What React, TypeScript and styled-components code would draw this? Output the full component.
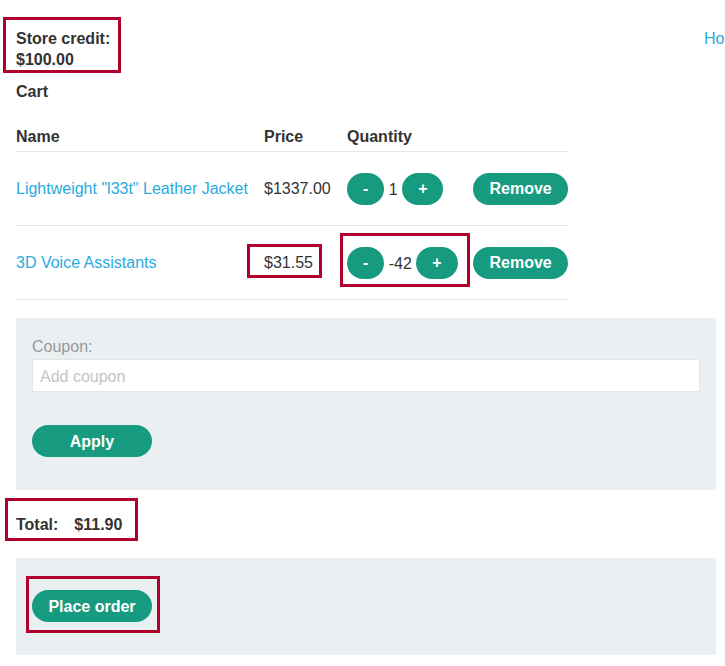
import React from "react";
import styled, { createGlobalStyle } from "styled-components";

const Global = createGlobalStyle`
  html, body { margin: 0; padding: 0; background: #fff; overflow: hidden; }
  body { font-family: "Liberation Sans", Arial, sans-serif; font-size: 16px; color: #333332; }
  * { box-sizing: border-box; }
`;

const Page = styled.div`
  width: 725px;
  overflow: hidden;
  padding: 0 0 0 16px;
`;

const TopBar = styled.div`
  display: flex;
  align-items: flex-start;
  justify-content: space-between;
  width: 740px;
  padding-top: 28px;
`;

const HomeLink = styled.a`
  color: #29abe0;
  text-decoration: none;
  line-height: 21px;
  width: 52px;
`;

const Strong = styled.div`
  font-weight: bold;
  line-height: 21px;
`;

const Highlight = styled.span<{ $t: number; $r: number; $b: number; $l: number }>`
  position: relative;
  display: inline-block;
  &::after {
    content: "";
    position: absolute;
    top: ${(p) => -p.$t}px;
    right: ${(p) => -p.$r}px;
    bottom: ${(p) => -p.$b}px;
    left: ${(p) => -p.$l}px;
    border: 3px solid #b0002b;
    pointer-events: none;
  }
`;

const CartTitle = styled.div`
  font-weight: bold;
  line-height: 21px;
  margin-top: 11px;
`;

const Table = styled.table`
  border-collapse: collapse;
  table-layout: fixed;
  width: 552px;
  margin-top: 18px;
`;

const Th = styled.th`
  text-align: left;
  font-weight: bold;
  padding: 6px 0 4px;
  line-height: 21px;
  border-bottom: 1px solid #e6e6e6;
`;

const Tr = styled.tr`
  height: 74px;
  border-bottom: 1px solid #e6e6e6;
`;

const Td = styled.td`
  padding: 0;
  vertical-align: middle;
  line-height: 21px;
  white-space: nowrap;
`;

const ProductLink = styled.a`
  color: #29abe0;
  text-decoration: none;
`;

const Button = styled.button<{ $wide?: boolean; $lower?: boolean }>`
  display: inline-block;
  height: 32px;
  min-width: ${(p) => (p.$wide ? "120px" : "0")};
  padding: ${(p) => (p.$lower ? "1px 16px 0" : "0 16px")};
  border: none;
  border-radius: 20px;
  background: #179b80;
  color: #fff;
  font-family: "Liberation Sans", Arial, sans-serif;
  font-size: 16px;
  font-weight: bold;
  line-height: ${(p) => (p.$lower ? "31px" : "32px")};
  vertical-align: middle;
  cursor: pointer;
`;

const RemoveButton = styled(Button)`
  padding: 0 16.5px;
`;

const Qty = styled.span`
  vertical-align: middle;
`;

const Panel = styled.div<{ $pad: string }>`
  width: 700px;
  background: #eaeff2;
  padding: ${(p) => p.$pad};
`;

const CouponPanel = styled(Panel)`
  margin-top: 18px;
`;

const Label = styled.div`
  color: #999;
  line-height: 21px;
  margin-bottom: 2px;
`;

const Input = styled.input`
  display: block;
  width: 668px;
  height: 33px;
  border: 1px solid #e3e6e8;
  background: #fff;
  padding: 2px 7px 0;
  font-family: "Liberation Sans", Arial, sans-serif;
  font-size: 16px;
  color: #333;
  outline: none;
  &::placeholder { color: #c4c4c4; }
`;

const ApplyRow = styled.div`
  margin-top: 33px;
`;

const TotalRow = styled.div`
  margin: 24px 0 23px;
  font-weight: bold;
  line-height: 21px;
`;

const TotalValue = styled.span`
  margin-left: 16px;
`;

export default function App() {
  return (
    <>
      <Global />
      <Page>
        <TopBar>
          <Highlight $t={11} $r={11} $b={3} $l={13}>
            <Strong>Store credit:</Strong>
            <Strong>$100.00</Strong>
          </Highlight>
          <HomeLink href="#">Home</HomeLink>
        </TopBar>
        <CartTitle>Cart</CartTitle>
        <Table>
          <colgroup>
            <col style={{ width: 248 }} />
            <col style={{ width: 83 }} />
            <col style={{ width: 126 }} />
            <col style={{ width: 95 }} />
          </colgroup>
          <thead>
            <tr>
              <Th>Name</Th>
              <Th>Price</Th>
              <Th>Quantity</Th>
              <Th></Th>
            </tr>
          </thead>
          <tbody>
            <Tr>
              <Td><ProductLink href="#">Lightweight "l33t" Leather Jacket</ProductLink></Td>
              <Td>$1337.00</Td>
              <Td>
                <Button>-</Button> <Qty>1</Qty> <Button>+</Button>
              </Td>
              <Td><RemoveButton>Remove</RemoveButton></Td>
            </Tr>
            <Tr>
              <Td><ProductLink href="#">3D Voice Assistants</ProductLink></Td>
              <Td>
                <Highlight $t={8} $r={9} $b={5} $l={17}>$31.55</Highlight>
              </Td>
              <Td>
                <Highlight $t={14} $r={12} $b={8} $l={7}>
                  <Button>-</Button> <Qty>-42</Qty> <Button>+</Button>
                </Highlight>
              </Td>
              <Td><RemoveButton>Remove</RemoveButton></Td>
            </Tr>
          </tbody>
        </Table>
        <CouponPanel $pad="18px 16px 33px">
          <Label>Coupon:</Label>
          <Input placeholder="Add coupon" />
          <ApplyRow>
            <Button $wide $lower>Apply</Button>
          </ApplyRow>
        </CouponPanel>
        <TotalRow>
          <Highlight $t={16} $r={16} $b={6} $l={11}>
            Total:<TotalValue>$11.90</TotalValue>
          </Highlight>
        </TotalRow>
        <Panel $pad="32px 16px 33px">
          <Highlight $t={14} $r={8} $b={11} $l={6}>
            <Button $wide $lower>Place order</Button>
          </Highlight>
        </Panel>
      </Page>
    </>
  );
}
